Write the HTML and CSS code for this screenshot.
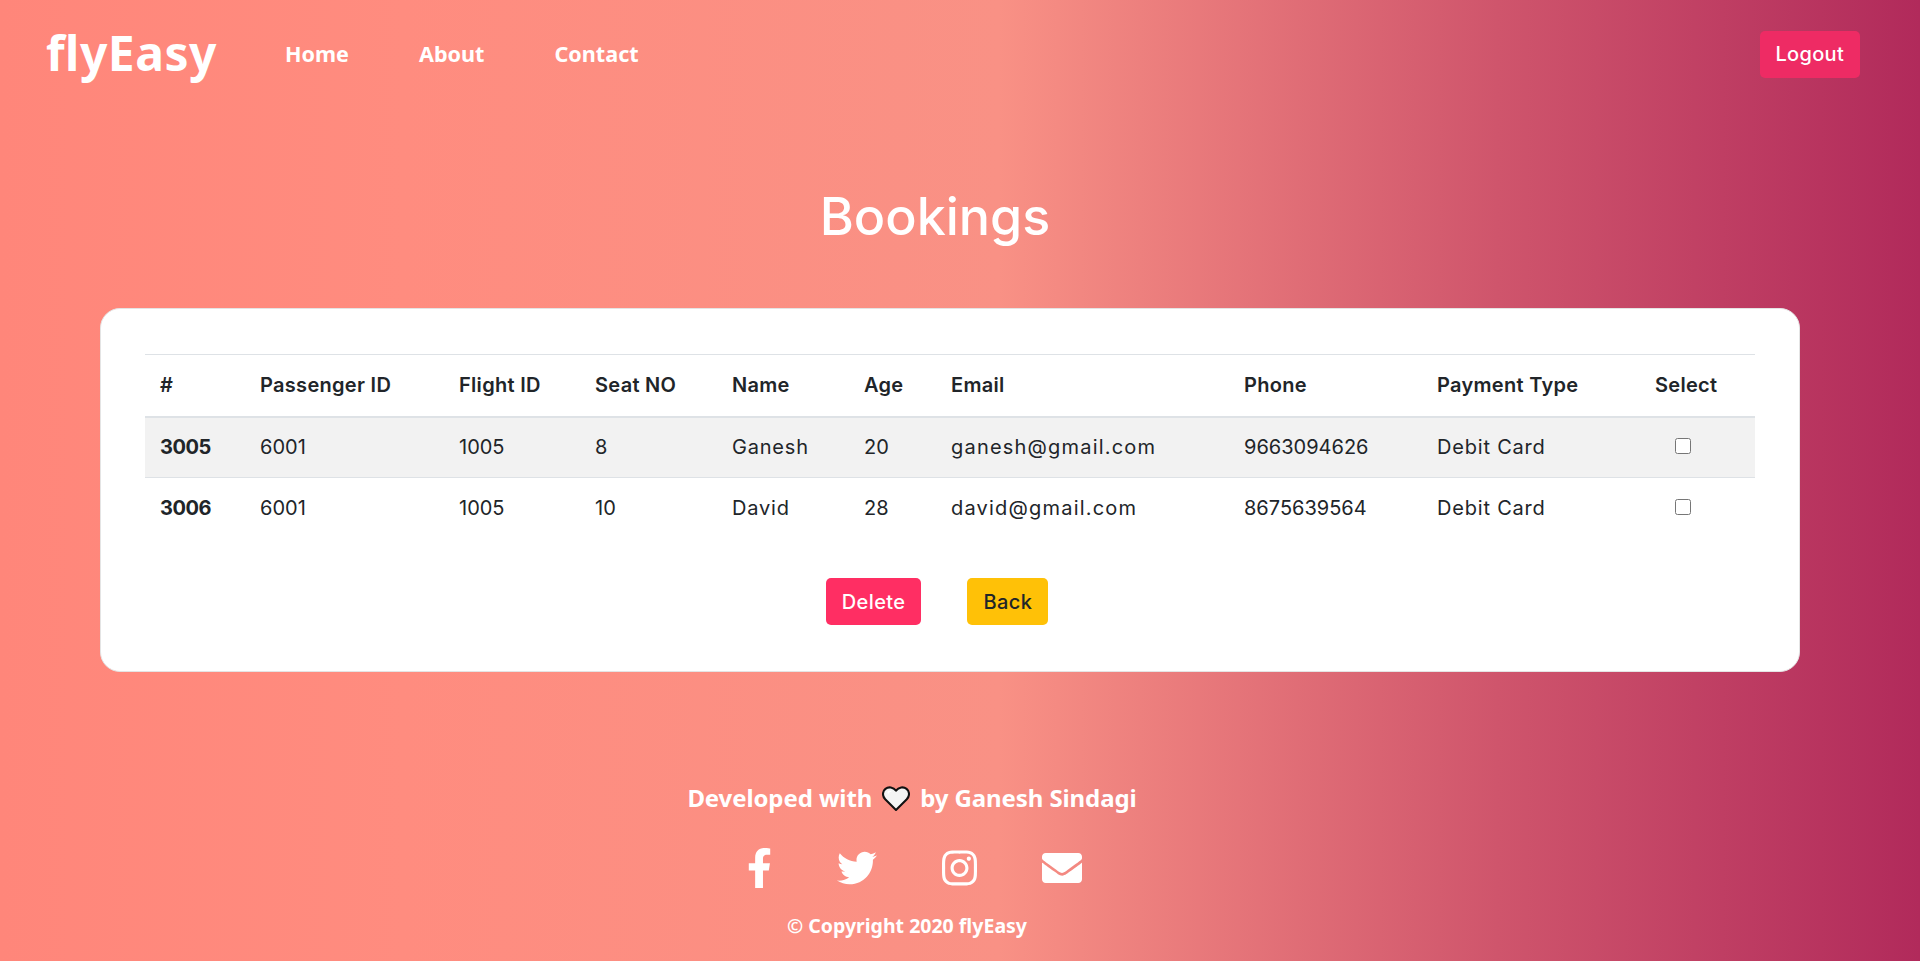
FILE: index.html
```html
<!DOCTYPE html>
<html lang="en">
<head>
  <meta charset="UTF-8" />
  <meta name="viewport" content="width=device-width, initial-scale=1.0"/>
  <title>flyEasy - Bookings</title>
  <link rel="stylesheet" href="styles.css">
</head>
<body>
  <nav class="navbar">
    <a class="brand" href="#">flyEasy</a>
    <ul class="nav-links">
      <li><a href="#">Home</a></li>
      <li><a href="#">About</a></li>
      <li><a href="#">Contact</a></li>
    </ul>
    <button class="btn btn-logout">Logout</button>
  </nav>

  <h1 class="page-title">Bookings</h1>

  <section class="card">
    <table class="bookings">
      <colgroup>
        <col class="c-id"><col class="c-passenger"><col class="c-flight"><col class="c-seat"><col class="c-name">
        <col class="c-age"><col class="c-email"><col class="c-phone"><col class="c-pay"><col class="c-select">
      </colgroup>
      <thead>
        <tr>
          <th>#</th><th>Passenger ID</th><th>Flight ID</th><th>Seat NO</th><th>Name</th>
          <th>Age</th><th>Email</th><th>Phone</th><th>Payment Type</th><th>Select</th>
        </tr>
      </thead>
      <tbody>
        <tr class="striped">
          <th>3005</th><td>6001</td><td>1005</td><td>8</td><td class="txt">Ganesh</td>
          <td>20</td><td class="mail">ganesh@gmail.com</td><td>9663094626</td><td class="txt">Debit Card</td>
          <td class="check"><input type="checkbox"></td>
        </tr>
        <tr>
          <th>3006</th><td>6001</td><td>1005</td><td>10</td><td class="txt">David</td>
          <td>28</td><td class="mail">david@gmail.com</td><td>8675639564</td><td class="txt">Debit Card</td>
          <td class="check"><input type="checkbox"></td>
        </tr>
      </tbody>
    </table>
    <div class="actions">
      <button class="btn btn-delete">Delete</button>
      <button class="btn btn-back">Back</button>
    </div>
  </section>

  <footer class="footer">
    <p class="credit">Developed with
      <svg class="heart" viewBox="0.5 0.5 27 24" aria-hidden="true">
        <path d="M14 23.5 3.6 13.2C.6 10.2.8 5.6 3.8 3.2 6.8.8 11.4 1.4 14 5c2.600-3.600 7.200-4.200 10.200-1.800 3 2.400 3.200 7 .2 10z" fill="#f4f4f4" stroke="#111" stroke-width="2" stroke-linejoin="round"/>
        <path d="M6 5.500c1.500-1 3.300-.6 4.300.6-1.500-.2-3 .6-3.800 2-.8-.7-1-1.900-.5-2.600z" fill="#fff"/>
      </svg>
      by Ganesh Sindagi</p>
    <div class="social">
      <a href="#"><svg class="ic-f" viewBox="0 0 320 512"><path d="M279.14 288l14.22-92.66h-88.91v-60.13c0-25.35 12.42-50.06 52.24-50.06h40.42V6.26S260.43 0 225.36 0c-73.22 0-121.08 44.38-121.08 124.72v70.62H22.89V288h81.39v224h100.17V288z"/></svg></a>
      <a href="#"><svg class="ic-w" viewBox="0 0 512 512"><path d="M459.37 151.716c.325 4.548.325 9.097.325 13.645 0 138.72-105.583 298.558-298.558 298.558-59.452 0-114.68-17.219-161.137-47.106 8.447.974 16.568 1.299 25.34 1.299 49.055 0 94.213-16.568 130.274-44.832-46.132-.975-84.792-31.188-98.112-72.772 6.498.974 12.995 1.624 19.818 1.624 9.421 0 18.843-1.3 27.614-3.573-48.081-9.747-84.143-51.98-84.143-102.985v-1.299c13.969 7.797 30.214 12.67 47.431 13.319-28.264-18.843-46.781-51.005-46.781-87.391 0-19.492 5.197-37.36 14.294-52.954 51.655 63.675 129.3 105.258 216.365 109.807-1.624-7.797-2.599-15.918-2.599-24.04 0-57.828 46.782-104.934 104.934-104.934 30.213 0 57.502 12.67 76.67 33.137 23.715-4.548 46.456-13.32 66.599-25.34-7.798 24.366-24.366 44.833-46.132 57.827 21.117-2.273 41.584-8.122 60.426-16.243-14.292 20.791-32.161 39.308-52.628 54.253z"/></svg></a>
      <a href="#"><svg class="ic-i" viewBox="0 0 448 512"><path d="M224.1 141c-63.6 0-114.9 51.3-114.9 114.9s51.3 114.9 114.9 114.9S339 319.5 339 255.9 287.7 141 224.1 141zm0 189.6c-41.1 0-74.7-33.5-74.7-74.7s33.5-74.7 74.7-74.7 74.7 33.5 74.7 74.7-33.6 74.7-74.7 74.7zm146.4-194.3c0 14.9-12 26.8-26.8 26.8-14.9 0-26.8-12-26.8-26.8s12-26.8 26.8-26.8 26.8 12 26.8 26.8zm76.1 27.2c-1.7-35.9-9.9-67.7-36.2-93.9-26.2-26.2-58-34.4-93.9-36.2-37-2.1-147.9-2.1-184.9 0-35.8 1.7-67.6 9.9-93.9 36.1s-34.4 58-36.2 93.9c-2.1 37-2.1 147.9 0 184.9 1.7 35.9 9.9 67.7 36.2 93.9s58 34.4 93.9 36.2c37 2.1 147.9 2.1 184.9 0 35.9-1.7 67.7-9.9 93.9-36.2 26.2-26.2 34.4-58 36.2-93.9 2.1-37 2.1-147.8 0-184.8zM398.8 388c-7.8 19.6-22.9 34.7-42.6 42.6-29.5 11.7-99.5 9-132.1 9s-102.7 2.6-132.1-9c-19.6-7.8-34.7-22.9-42.6-42.6-11.7-29.5-9-99.5-9-132.1s-2.6-102.7 9-132.1c7.8-19.6 22.9-34.7 42.6-42.6 29.5-11.7 99.5-9 132.1-9s102.7-2.6 132.1 9c19.6 7.8 34.7 22.9 42.6 42.6 11.7 29.5 9 99.5 9 132.1s2.7 102.7-9 132.1z"/></svg></a>
      <a href="#"><svg class="ic-w" viewBox="0 0 512 512"><path d="M502.3 190.8c3.9-3.1 9.7-.2 9.7 4.7V400c0 26.5-21.5 48-48 48H48c-26.5 0-48-21.5-48-48V195.6c0-5 5.700-7.800 9.700-4.700 22.400 17.400 52.100 39.500 154.100 113.600 21.100 15.400 56.700 49.800 94.200 49.600 37.700.3 75.200-34.900 94.300-48.800 102-74.100 131.600-96.300 154-113.700zM256 320c23.200.4 56.600-29.200 73.400-41.400 132.700-96.300 142.800-104.700 173.400-128.700 5.800-4.500 9.200-11.500 9.200-18.900v-19c0-26.500-21.500-48-48-48H48C21.500 64 0 85.500 0 112v19c0 7.400 3.400 14.300 9.200 18.900 30.600 23.900 40.700 32.400 173.400 128.700 16.800 12.200 50.200 41.800 73.400 41.400z"/></svg></a>
    </div>
    <p class="copyright">© Copyright 2020 flyEasy</p>
  </footer>
</body>
</html>
```

FILE: styles.css
```css
* {
  box-sizing: border-box;
}
body {
  margin: 0;
  height: 961px;
  overflow: hidden;
  font-family: Inter, "Liberation Sans", sans-serif;
  color: #212529;
  background: linear-gradient(to right, #ff8177 0%, #ff867a 0%, #ff8c7f 21%, #f99185 52%, #cf556c 78%, #b12a5b 100%);
}
a {
  color: inherit;
  text-decoration: none;
}

/* navbar */
.navbar {
  display: flex;
  align-items: center;
  height: 108px;
  padding: 0 60px 0 46px;
  color: white;
  font-family: "Noto Sans", sans-serif;
  font-weight: 700;
}
.brand {
  width: 239px;
  margin-bottom: 4px;
  font-size: 48px;
  letter-spacing: 0.5px;
}
.nav-links {
  display: flex;
  gap: 70px;
  margin: 0 0 2px;
  padding: 0;
  list-style: none;
  font-size: 21.6px;
}
.btn {
  border: none;
  border-radius: 5px;
  height: 47px;
  padding: 0 16px;
  font-family: Inter, sans-serif;
  font-size: 20px;
  font-weight: 500;
  letter-spacing: 0.4px;
  cursor: pointer;
}
.btn-logout {
  margin-left: auto;
  background-color: #ee2b64;
  color: white;
  letter-spacing: 0.3px;
}
.btn-delete {
  padding-top: 2px;
  background-color: #ff2e63;
  color: white;
}
.btn-back {
  padding-top: 2px;
  background-color: #ffc107;
  color: #212529;
}

.page-title {
  margin: 74px 50px 0 0;
  height: 70px;
  color: white;
  font-size: 52px;
  line-height: 70px;
  font-weight: 500;
  text-align: center;
}

/* bookings card */
.card {
  margin: 56px 120px 0 100px;
  height: 364px;
  padding: 45px 44px 0;
  background: white;
  border-radius: 20px;
  border: 1px solid #e4e4e4;
}
.bookings {
  width: 100%;
  table-layout: fixed;
  border-collapse: collapse;
  font-size: 20px;
}
.bookings th, .bookings td {
  padding: 0 16px;
  height: 61px;
  text-align: left;
  border-top: 1px solid #dee2e6;
}
.bookings th:first-child {
  padding-left: 15px;
}
.bookings thead th {
  height: 62px;
  font-weight: 600;
  letter-spacing: 0.3px;
  border-bottom: 2px solid #dee2e6;
}
.bookings tbody th {
  font-weight: 700;
  letter-spacing: -0.5px;
}
.bookings td {
  font-weight: 400;
}
.bookings td.txt {
  letter-spacing: 0.8px;
}
.bookings td.mail {
  letter-spacing: 1.2px;
}
.striped {
  background-color: #f2f2f2;
}
.check input {
  display: block;
  width: 16px;
  height: 16px;
  margin: 0 0 2px 20px;
}
.c-id { width: 99px; }
.c-passenger { width: 199px; }
.c-flight { width: 136px; }
.c-seat { width: 137px; }
.c-name { width: 132px; }
.c-age { width: 87px; }
.c-email { width: 293px; }
.c-phone { width: 193px; }
.c-pay { width: 218px; }
.c-select { width: 116px; }

.actions {
  display: flex;
  justify-content: center;
  gap: 46px;
  margin-top: 39px;
  padding-right: 26px;
}

/* footer */
.footer {
  margin-top: 109px;
  color: white;
  font-family: "Noto Sans", sans-serif;
  font-weight: 700;
  text-align: center;
}
.credit {
  display: flex;
  align-items: center;
  justify-content: center;
  gap: 10px;
  margin: 0 96px 0 0;
  font-size: 24px;
  letter-spacing: -0.1px;
  line-height: 34px;
}
.heart {
  width: 28px;
  height: 25px;
}
.social {
  display: flex;
  justify-content: center;
  gap: 65px;
  margin: 33px 92px 0 0;
  height: 40px;
}
.social svg {
  display: block;
  height: 40px;
  fill: white;
}
.ic-f { width: 25px; }
.ic-w { width: 40px; }
.ic-i { width: 35px; }
.copyright {
  margin: 24px 106px 0 0;
  font-size: 19.5px;
}
```
